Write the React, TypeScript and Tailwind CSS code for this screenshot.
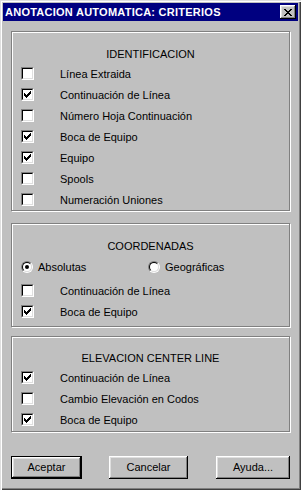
const bevelOut =
  "shadow-[inset_-1px_-1px_0_#000,inset_1px_1px_0_#fff,inset_-2px_-2px_0_#808080,inset_2px_2px_0_#dfdfdf]";

function CheckMark() {
  // classic 7x7 windows check
  const rows = ["......X", ".....XX", "X...XXX", "XX.XXX.", "XXXXX..", ".XXX...", "..X...."];
  return (
    <svg width="7" height="7" viewBox="0 0 7 7" shapeRendering="crispEdges">
      {rows.map((r, y) =>
        r.split("").map((c, x) =>
          c === "X" ? <rect key={`${x}-${y}`} x={x} y={y} width="1" height="1" fill="#000" /> : null
        )
      )}
    </svg>
  );
}

function Checkbox({ checked }: { checked?: boolean }) {
  return (
    <div className="w-[13px] h-[13px] shrink-0 bg-white border border-t-[#808080] border-l-[#808080] border-b-white border-r-white">
      <div className="w-full h-full border border-t-black border-l-black border-b-[#dfdfdf] border-r-[#dfdfdf] flex items-center justify-center">
        {checked && <CheckMark />}
      </div>
    </div>
  );
}

function Radio({ checked }: { checked?: boolean }) {
  return (
    <div className="w-[12px] h-[12px] shrink-0 rounded-full border border-t-[#808080] border-l-[#808080] border-b-white border-r-white">
      <div className="w-full h-full rounded-full bg-white border border-t-black border-l-black border-b-[#dfdfdf] border-r-[#dfdfdf] flex items-center justify-center">
        {checked && <div className="w-[4px] h-[4px] rounded-full bg-black" />}
      </div>
    </div>
  );
}

function CheckRow({ label, checked }: { label: string; checked?: boolean }) {
  return (
    <div className="h-[21px] flex items-center pl-[9px]">
      <Checkbox checked={checked} />
      <span className="ml-[26px] pt-[2px]">{label}</span>
    </div>
  );
}

function Group({ className, children }: { className: string; children: React.ReactNode }) {
  return (
    <div
      className={`mx-[8px] border border-[#808080] shadow-[1px_1px_0_#fff,inset_1px_1px_0_#fff] ${className}`}
    >
      {children}
    </div>
  );
}

function CloseGlyph() {
  const rows = ["XX....XX", ".XX..XX.", "..XXXX..", "...XX...", "..XXXX..", ".XX..XX.", "XX....XX"];
  return (
    <svg width="8" height="7" viewBox="0 0 8 7" shapeRendering="crispEdges">
      {rows.map((r, y) =>
        r.split("").map((c, x) =>
          c === "X" ? <rect key={`${x}-${y}`} x={x} y={y} width="1" height="1" fill="#000" /> : null
        )
      )}
    </svg>
  );
}

export default function App() {
  return (
    <div className="w-[301px] h-[490px] bg-[#c0c0c0] p-[3px] flex flex-col text-[11px] leading-none text-black font-['Liberation_Sans',Arial,sans-serif] shadow-[inset_1px_1px_0_#dfdfdf,inset_2px_2px_0_#fff,inset_-1px_-1px_0_#404040,inset_-2px_-2px_0_#808080]">
      {/* title bar */}
      <div className="h-[18px] bg-[#000080] flex items-center pl-[2px] pr-[2px]">
        <span className="text-white font-bold tracking-[0.25px]">ANOTACION AUTOMATICA: CRITERIOS</span>
        <div className={`ml-auto w-[16px] h-[14px] bg-[#c0c0c0] flex items-center justify-center ${bevelOut}`}>
          <CloseGlyph />
        </div>
      </div>

      <Group className="mt-[10px] h-[180px] pt-[10px]">
        <div className="h-[21px] flex items-center justify-center pt-[3px]">IDENTIFICACION</div>
        <CheckRow label="Línea Extraida" />
        <CheckRow label="Continuación de Línea" checked />
        <CheckRow label="Número Hoja Continuación" />
        <CheckRow label="Boca de Equipo" checked />
        <CheckRow label="Equipo" checked />
        <CheckRow label="Spools" />
        <CheckRow label="Numeración Uniones" />
      </Group>

      <Group className="mt-[12px] h-[104px] pt-[11px]">
        <div className="h-[21px] flex items-center justify-center pt-[2px]">COORDENADAS</div>
        <div className="h-[21px] flex items-center pl-[9px]">
          <div className="w-[127px] flex items-center">
            <Radio checked />
            <span className="ml-[5px] pt-[1px]">Absolutas</span>
          </div>
          <Radio />
          <span className="ml-[5px] pt-[1px]">Geográficas</span>
        </div>
        <div className="mt-[3px]">
          <CheckRow label="Continuación de Línea" />
          <CheckRow label="Boca de Equipo" checked />
        </div>
      </Group>

      <Group className="mt-[9px] h-[96px] pt-[10px]">
        <div className="h-[20px] flex items-center justify-center pt-[3px]">ELEVACION CENTER LINE</div>
        <CheckRow label="Continuación de Línea" checked />
        <CheckRow label="Cambio Elevación en Codos" />
        <CheckRow label="Boca de Equipo" checked />
      </Group>

      <div className="mt-[24px] flex pl-[8px]">
        <div className="w-[71px] h-[23px] border border-black">
          <div className={`w-full h-full flex items-center justify-center ${bevelOut}`}>Aceptar</div>
        </div>
        <div className={`ml-[27px] w-[79px] h-[23px] flex items-center justify-center ${bevelOut}`}>Cancelar</div>
        <div className={`ml-[28px] w-[74px] h-[23px] flex items-center justify-center ${bevelOut}`}>Ayuda...</div>
      </div>
    </div>
  );
}
